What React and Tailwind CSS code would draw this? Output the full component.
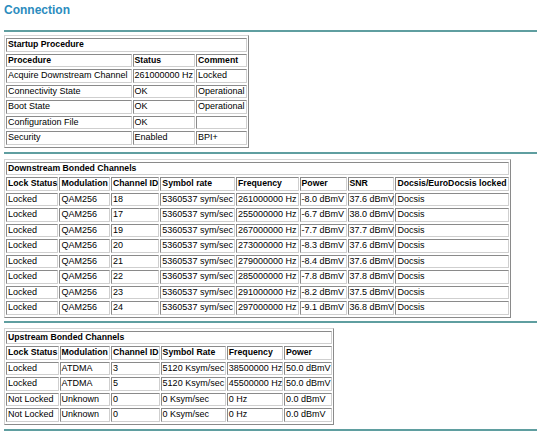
import React from 'react';

const startupRows = [
  ['Acquire Downstream Channel', '261000000 Hz', 'Locked'],
  ['Connectivity State', 'OK', 'Operational'],
  ['Boot State', 'OK', 'Operational'],
  ['Configuration File', 'OK', ''],
  ['Security', 'Enabled', 'BPI+'],
];

const downRows = [
  ['18', '261000000 Hz', '-8.0 dBmV', '37.6 dBmV'],
  ['17', '255000000 Hz', '-6.7 dBmV', '38.0 dBmV'],
  ['19', '267000000 Hz', '-7.7 dBmV', '37.7 dBmV'],
  ['20', '273000000 Hz', '-8.3 dBmV', '37.6 dBmV'],
  ['21', '279000000 Hz', '-8.4 dBmV', '37.6 dBmV'],
  ['22', '285000000 Hz', '-7.8 dBmV', '37.8 dBmV'],
  ['23', '291000000 Hz', '-8.2 dBmV', '37.5 dBmV'],
  ['24', '297000000 Hz', '-9.1 dBmV', '36.8 dBmV'],
];

const upRows = [
  ['Locked', 'ATDMA', '3', '5120 Ksym/sec', '38500000 Hz', '50.0 dBmV'],
  ['Locked', 'ATDMA', '5', '5120 Ksym/sec', '45500000 Hz', '50.0 dBmV'],
  ['Not Locked', 'Unknown', '0', '0 Ksym/sec', '0 Hz', '0.0 dBmV'],
  ['Not Locked', 'Unknown', '0', '0 Ksym/sec', '0 Hz', '0.0 dBmV'],
];

// classic border=1 look: outset table, inset cells
const cell =
  'border border-t-[#8a8a8a] border-l-[#8a8a8a] border-b-[#cfcfcf] border-r-[#cfcfcf] px-[1px] py-0 leading-[11.5px] whitespace-nowrap overflow-visible text-left align-middle';

const Rule = () => <div className="w-[533px] h-[2px] bg-[#5f9ea0]" />;

const Table = ({ width, cols, title, head, rows }) => (
  <table
    className={`table-fixed border-separate border-spacing-x-[1.5px] border-spacing-y-[2px] border border-t-[#d4d4d4] border-l-[#d4d4d4] border-b-[#8a8a8a] border-r-[#8a8a8a] ${width}`}
  >
    <colgroup>
      {cols.map((c, i) => (
        <col key={i} className={c} />
      ))}
    </colgroup>
    <tbody>
      <tr>
        <th colSpan={cols.length} className={`${cell} font-bold text-[8.7px]`}>
          {title}
        </th>
      </tr>
      <tr>
        {head.map((h, i) => (
          <th key={i} className={`${cell} font-bold text-[8.7px]`}>
            {h}
          </th>
        ))}
      </tr>
      {rows.map((r, i) => (
        <tr key={i}>
          {r.map((v, j) => (
            <td key={j} className={`${cell} font-normal text-[9px]`}>
              {v}
            </td>
          ))}
        </tr>
      ))}
    </tbody>
  </table>
);

export default function App() {
  return (
    <div className="w-[540px] h-[433px] bg-white text-black font-['Liberation_Sans',Arial,sans-serif] pl-[4px] pt-[3px] overflow-hidden">
      <h1 className="text-[12px] leading-[15px] font-bold text-[#2b8cbe]">Connection</h1>

      <div className="mt-[12px]">
        <Rule />
      </div>

      <div className="mt-[3px]">
        <Table
          width="w-[244.5px]"
          cols={['w-[124.5px]', 'w-[62px]', 'w-[50px]']}
          title="Startup Procedure"
          head={['Procedure', 'Status', 'Comment']}
          rows={startupRows}
        />
      </div>

      <div className="mt-[4px]">
        <Rule />
      </div>

      <div className="mt-[5px]">
        <Table
          width="w-[506.5px]"
          cols={['w-[52px]', 'w-[50px]', 'w-[48px]', 'w-[74px]', 'w-[62px]', 'w-[46.5px]', 'w-[46.5px]', 'w-[112px]']}
          title="Downstream Bonded Channels"
          head={['Lock Status', 'Modulation', 'Channel ID', 'Symbol rate', 'Frequency', 'Power', 'SNR', 'Docsis/EuroDocsis locked']}
          rows={downRows.map((r) => ['Locked', 'QAM256', r[0], '5360537 sym/sec', r[1], r[2], r[3], 'Docsis'])}
        />
      </div>

      <div className="mt-[3px]">
        <Rule />
      </div>

      <div className="mt-[5px]">
        <Table
          width="w-[330px]"
          cols={['w-[52px]', 'w-[50px]', 'w-[48px]', 'w-[64.5px]', 'w-[55.5px]', 'w-[47.5px]']}
          title="Upstream Bonded Channels"
          head={['Lock Status', 'Modulation', 'Channel ID', 'Symbol Rate', 'Frequency', 'Power']}
          rows={upRows}
        />
      </div>

      <div className="mt-[4px]">
        <Rule />
      </div>
    </div>
  );
}
